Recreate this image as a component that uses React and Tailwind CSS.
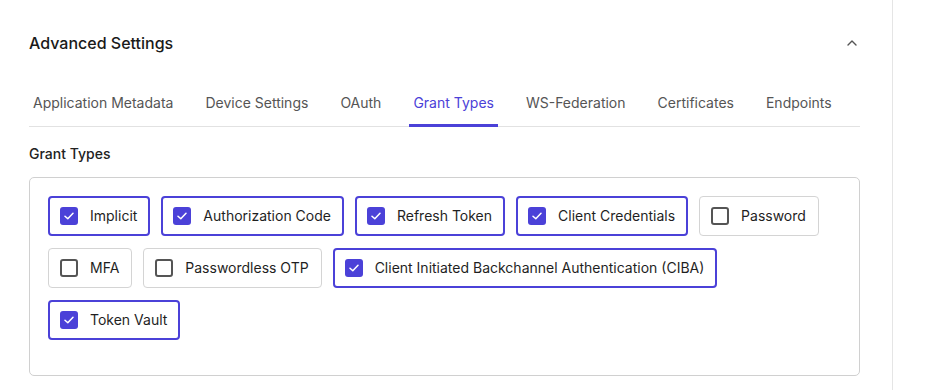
import React, { useState } from 'react';

const TABS = ['Application Metadata', 'Device Settings', 'OAuth', 'Grant Types', 'WS-Federation', 'Certificates', 'Endpoints'];

const GRANTS = [
  { name: 'Implicit', checked: true },
  { name: 'Authorization Code', checked: true },
  { name: 'Refresh Token', checked: true },
  { name: 'Client Credentials', checked: true },
  { name: 'Password', checked: false },
  { name: 'MFA', checked: false },
  { name: 'Passwordless OTP', checked: false },
  { name: 'Client Initiated Backchannel Authentication (CIBA)', checked: true },
  { name: 'Token Vault', checked: true },
];

const GrantOption = ({ name, checked, onToggle }) => (
  <button
    onClick={onToggle}
    className={
      checked
        ? 'flex items-center h-[40px] pl-[10px] pr-[11px] gap-3 rounded-[4px] border-2 border-[#4b41d8] bg-white'
        : 'flex items-center h-[40px] pl-[11px] pr-[12px] gap-3 rounded-[4px] border border-[#d4d4d4] bg-white'
    }
  >
    {checked ? (
      <span className="w-[18px] h-[18px] rounded-[3px] bg-[#4b41d8] flex items-center justify-center">
        <svg width="10" height="8" viewBox="0 0 10 8" fill="none">
          <path d="M1 4.2 L3.8 6.8 L9 1.2" stroke="white" strokeWidth="1.5" strokeLinecap="round" strokeLinejoin="round" />
        </svg>
      </span>
    ) : (
      <span className="w-[18px] h-[18px] rounded-[3px] border-2 border-[#555]" />
    )}
    <span className="text-[14px] text-[#1f1f1f] leading-none">{name}</span>
  </button>
);

const App = () => {
  const [activeTab, setActiveTab] = useState('Grant Types');
  const [grants, setGrants] = useState(GRANTS);

  const toggle = (idx) => {
    setGrants(grants.map((g, i) => (i === idx ? { ...g, checked: !g.checked } : g)));
  };

  return (
    <div className="w-[925px] h-[390px] bg-white flex font-['Inter',sans-serif] overflow-hidden">
      <div className="w-[893px] border-r border-[#e5e5e5] pl-[29px] pr-[32px]">
        {/* header */}
        <div className="flex items-center justify-between h-[86px]">
          <h2 className="text-[16px] font-medium text-[#1a1a1a]">Advanced Settings</h2>
          <svg width="12" height="8" viewBox="0 0 12 8" fill="none" className="mr-[2px]">
            <path d="M2 6 L6 2 L10 6" stroke="#555" strokeWidth="1.4" strokeLinecap="round" strokeLinejoin="round" />
          </svg>
        </div>

        {/* tabs */}
        <div className="flex gap-[24px] border-b border-[#e2e2e2] mt-[2px]">
          {TABS.map((t) => (
            <button
              key={t}
              onClick={() => setActiveTab(t)}
              className={
                t === activeTab
                  ? 'px-[4px] pt-[4px] pb-[11px] text-[14px] text-[#4b41d8] border-b-[3px] border-[#4b41d8] -mb-px'
                  : 'px-[4px] pt-[4px] pb-[11px] text-[14px] text-[#555] border-b-[3px] border-transparent -mb-px'
              }
            >
              {t}
            </button>
          ))}
        </div>

        <div className="mt-[16px] text-[14px] font-medium text-[#222]">Grant Types</div>

        <div className="mt-[13px] border border-[#d0d0d0] rounded-[5px] pl-[18px] pr-[18px] pt-[18px] pb-[35px] flex flex-wrap gap-x-[11px] gap-y-[12px]">
          {grants.map((g, i) => (
            <GrantOption key={g.name} name={g.name} checked={g.checked} onToggle={() => toggle(i)} />
          ))}
        </div>
      </div>
    </div>
  );
};

export default App;
